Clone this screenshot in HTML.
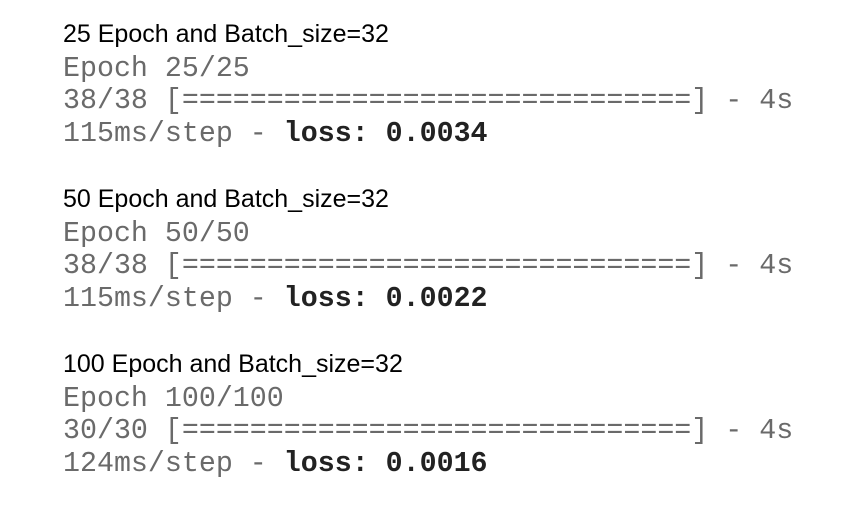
<!DOCTYPE html>
<html><head><style>
html,body{margin:0;padding:0;background:#fff;width:855px;height:522px;overflow:hidden}
.h{position:absolute;left:63px;font-family:"Liberation Sans",sans-serif;font-size:25px;color:#000;line-height:30px;white-space:pre;letter-spacing:0}
.m{position:absolute;left:63px;font-family:"Liberation Mono",monospace;font-size:28.3px;color:#6a6a6a;line-height:32px;white-space:pre}
.m b{color:#222}
</style></head><body>
<div class="h" style="top:19px">25 Epoch and Batch_size=32</div>
<div class="m" style="top:53px">Epoch 25/25</div>
<div class="m" style="top:85px">38/38 [==============================] - 4s</div>
<div class="m" style="top:118px">115ms/step - <b>loss: 0.0034</b></div>

<div class="h" style="top:184px">50 Epoch and Batch_size=32</div>
<div class="m" style="top:218px">Epoch 50/50</div>
<div class="m" style="top:250px">38/38 [==============================] - 4s</div>
<div class="m" style="top:283px">115ms/step - <b>loss: 0.0022</b></div>

<div class="h" style="top:349px">100 Epoch and Batch_size=32</div>
<div class="m" style="top:383px">Epoch 100/100</div>
<div class="m" style="top:415px">30/30 [==============================] - 4s</div>
<div class="m" style="top:448px">124ms/step - <b>loss: 0.0016</b></div>
</body></html>
